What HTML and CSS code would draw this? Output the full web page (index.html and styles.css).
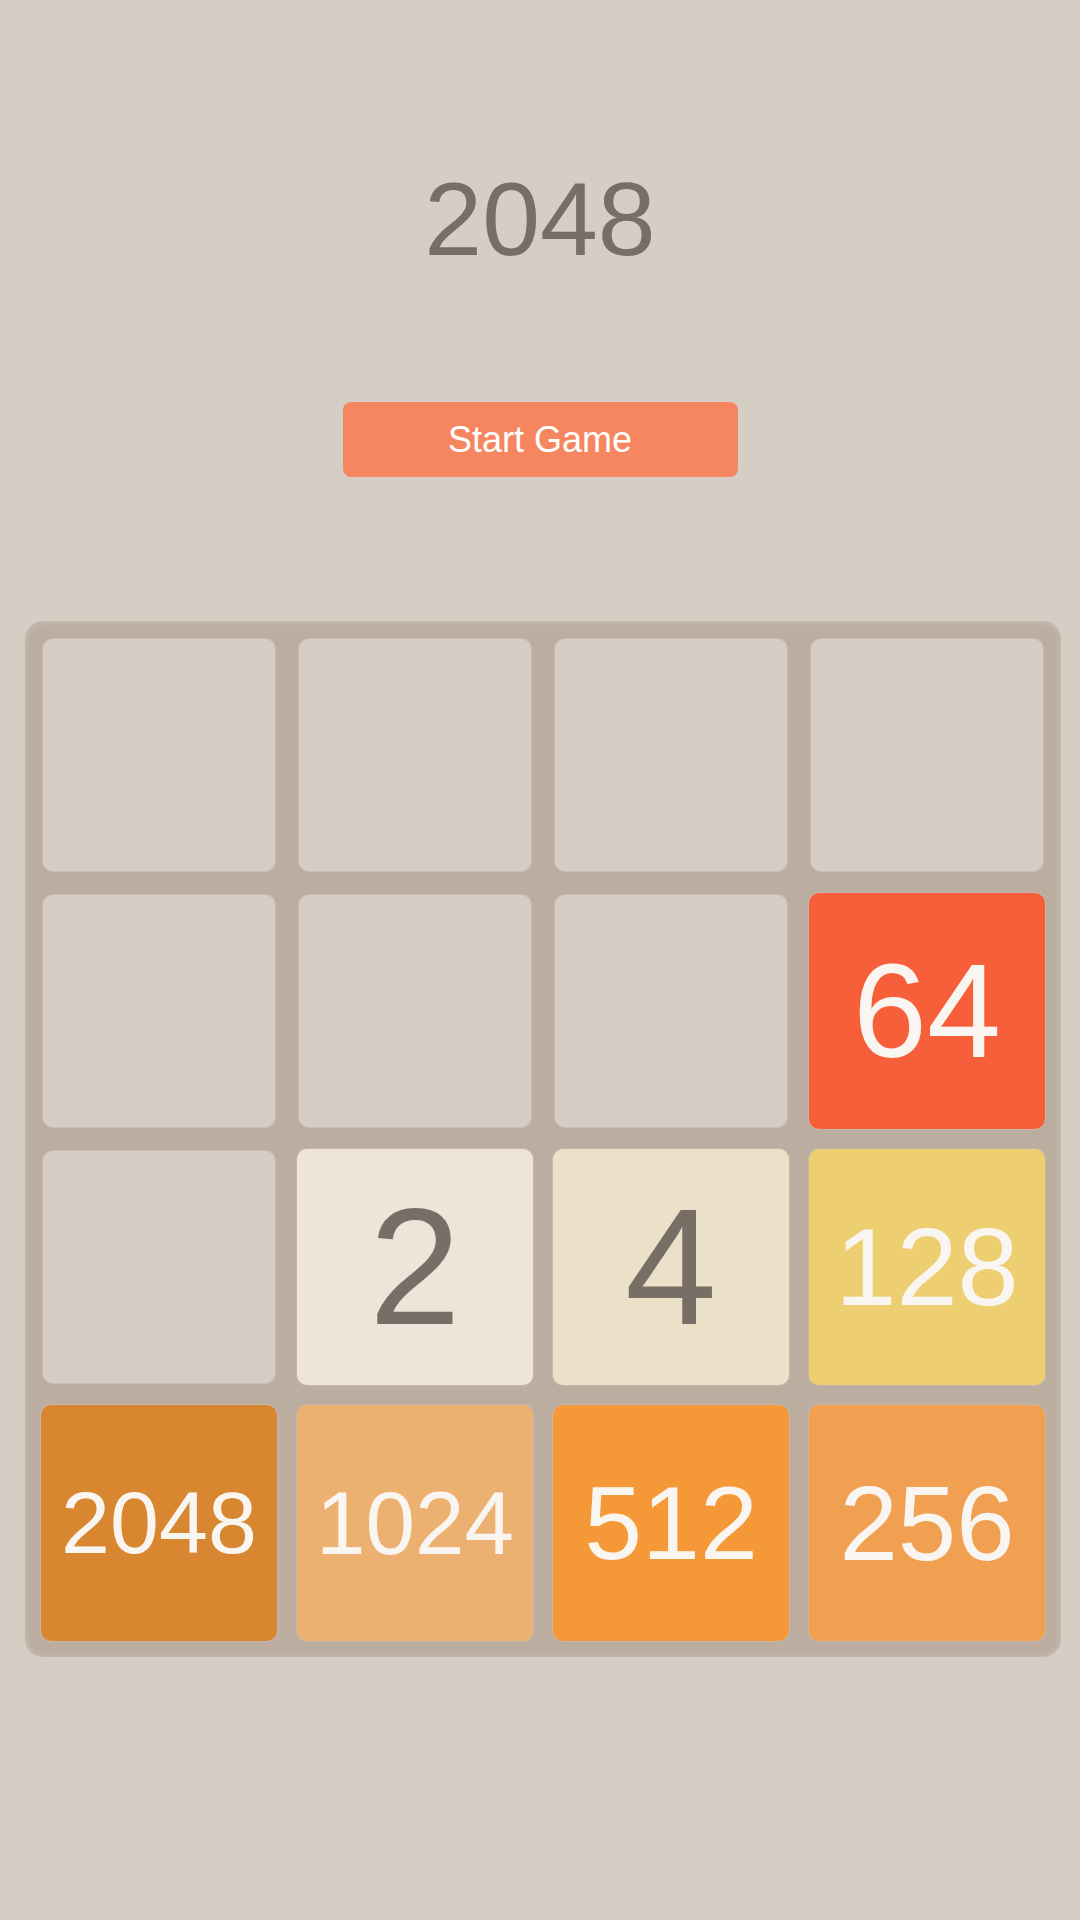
FILE: index.html
```html
<!DOCTYPE html>
<html lang="en">
<head>
  <meta charset="UTF-8">
  <title>2048</title>
  <meta name="viewport" content="width=device-width, initial-scale=1.0">
  <link rel="stylesheet" href="styles.css">
</head>
<body>
  <div class="heading">
    <div class="title">2048</div>
    <button class="start-btn" id="startBtn">Start Game</button>
  </div>

  <div class="board" id="board">
    <div class="cell"></div>
    <div class="cell"></div>
    <div class="cell"></div>
    <div class="cell"></div>

    <div class="cell"></div>
    <div class="cell"></div>
    <div class="cell"></div>
    <div class="cell tile t64">64</div>

    <div class="cell"></div>
    <div class="cell tile t2">2</div>
    <div class="cell tile t4">4</div>
    <div class="cell tile t128">128</div>

    <div class="cell tile t2048">2048</div>
    <div class="cell tile t1024">1024</div>
    <div class="cell tile t512">512</div>
    <div class="cell tile t256">256</div>
  </div>
</body>
</html>
```

FILE: styles.css
```css
body {
  background: #d6cdc4;
  margin: 0;
  padding: 0;
  font-family: 'Liberation Sans', Arial, sans-serif;
  min-height: 100vh;
}
.heading {
  display: flex;
  flex-direction: column;
  align-items: center;
  padding-top: 167px;
}
.title {
  font-size: 104px;
  line-height: 1;
  color: #776e65;
}
.start-btn {
  margin-top: 131px;
  width: 395px;
  height: 75px;
  background: #f68660;
  color: #fff;
  border: none;
  border-radius: 8px;
  font-family: inherit;
  font-size: 36px;
  line-height: 75px;
  padding: 0;
  cursor: pointer;
}
.board {
  margin: 144px 0 0 25px;
  width: 1036px;
  box-sizing: border-box;
  padding: 18px;
  background: #bbada0;
  border-radius: 18px;
  box-shadow: inset 0 0 7px rgba(255,255,255,0.3);
  display: grid;
  grid-template-columns: repeat(4, 1fr);
  grid-auto-rows: 232px;
  gap: 24px;
}
.cell {
  background: #d6cdc4;
  border-radius: 10px;
  box-shadow: 0 0 0 1px rgba(228,220,212,0.35);
  display: flex;
  align-items: center;
  justify-content: center;
  line-height: 1;
  color: #f9f6f2;
}
.tile {
  margin: -2px;
  box-shadow: 0 0 1px 1px rgba(240,232,224,0.2);
}
.t2    { background: #eee4da; color: #776e65; font-size: 165px; }
.t4    { background: #ede0c8; color: #776e65; font-size: 165px; }
.t64   { background: #f75f3b; font-size: 133px; }
.t128  { background: #edcf71; font-size: 110px; }
.t256  { background: #f0a050; font-size: 105px; }
.t512  { background: #f59938; font-size: 104px; }
.t1024 { background: #ecb071; font-size: 89px; }
.t2048 { background: #d98630; font-size: 88px; }
```
